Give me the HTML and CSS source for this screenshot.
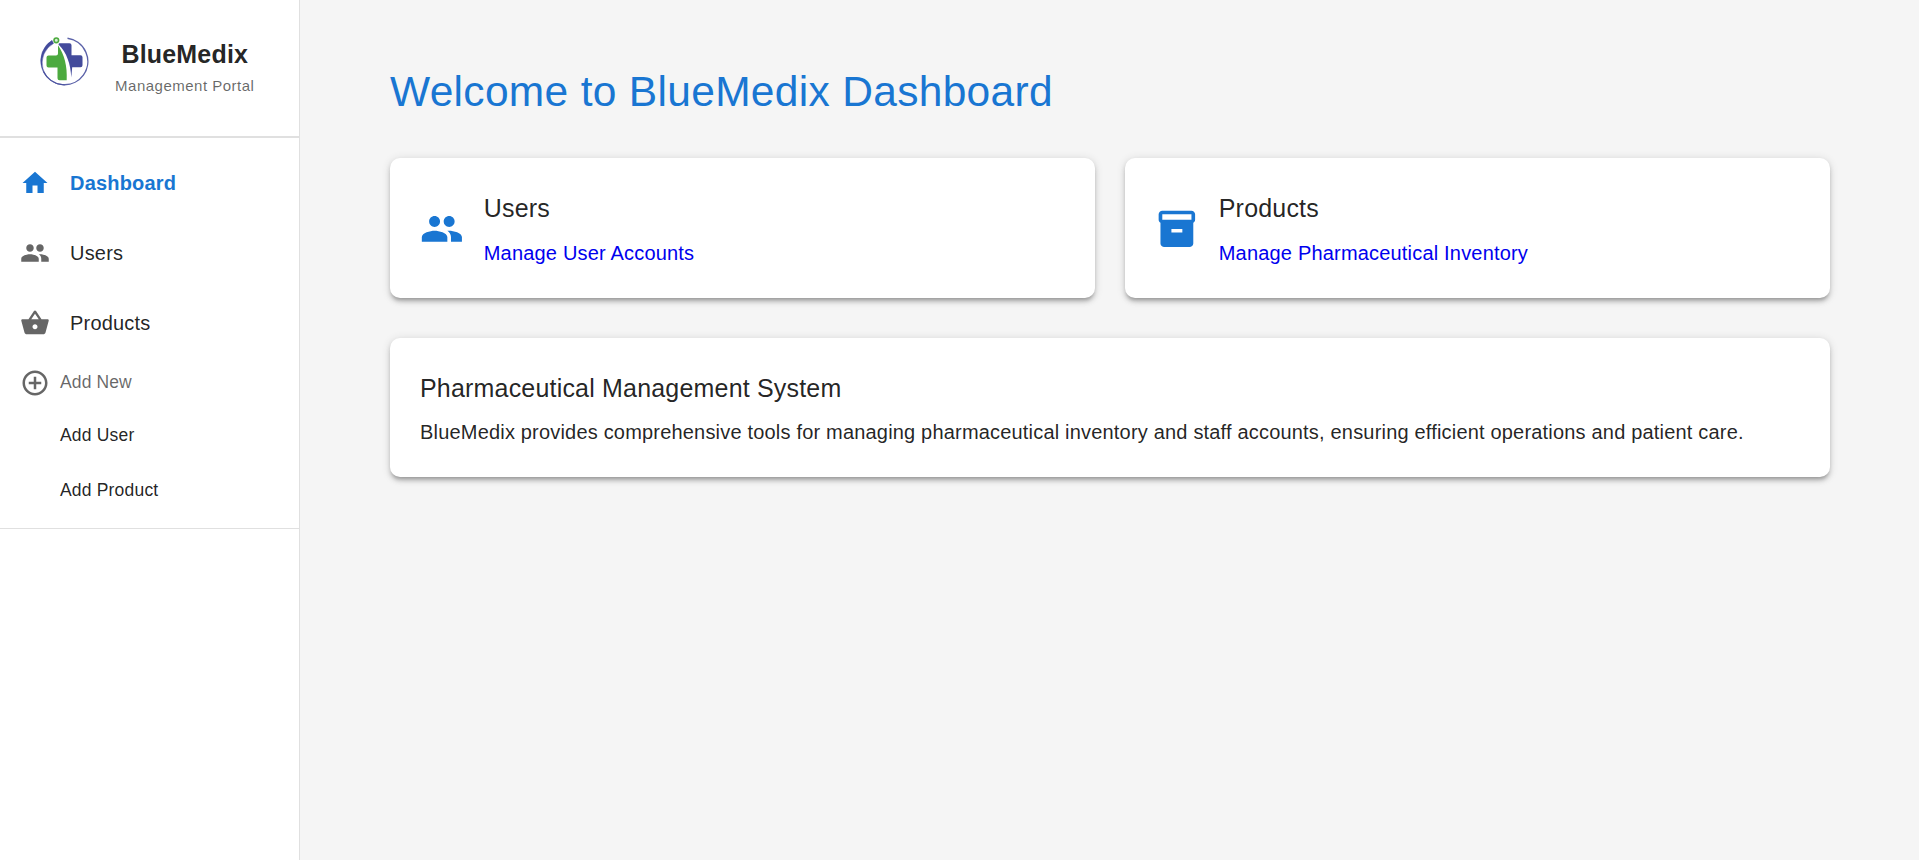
FILE: index.html
```
<!DOCTYPE html>
<html lang="en">
<head>
<meta charset="utf-8">
<title>BlueMedix Dashboard</title>
<link rel="stylesheet" href="styles.css">
</head>
<body>
<div class="layout">
  <aside class="sidebar">
    <header class="brand">
      <svg class="brand-logo" viewBox="0 0 50 50" aria-hidden="true">
        <path d="M27.500 2.300A23.300 23.300 0 1 1 3.500 35.500" fill="none" stroke="#5a61a8" stroke-width="1.400"/>
        <path d="M12 4.300A24.200 24.200 0 0 0 24.500 49A22.200 22.200 0 0 1 13.600 7.400Z" fill="#434b9c" stroke="#434b9c" stroke-width=".4"/>
        <circle cx="16.300" cy="4.300" r="2.300" fill="#d9f0d5" stroke="#4caa3f" stroke-width="1.600"/>
        <path d="M19 7.300H29.500Q31.500 7.300 31.500 9.300V19.300H40.500Q42.500 19.300 42.500 21.300V29.300Q42.500 31.300 40.500 31.300H32.200L31.300 41.500C30.500 28 27 17 18.500 8.500Z" fill="#434b9c"/>
        <path d="M18 9.300C24.500 19 27.400 30 26.700 44.200H19.500Q17.500 44.200 17.500 42.200V31.600H8.500Q6.500 31.600 6.500 29.600V21.600Q6.500 19.600 8.500 19.600H16Q18 19.600 18 17.600Z" fill="#4caa3f"/>
      </svg>
      <div class="brand-text">
        <div class="brand-name">BlueMedix</div>
        <div class="brand-sub">Management Portal</div>
      </div>
    </header>
    <nav class="nav">
      <a class="nav-item active">
        <svg class="icon" viewBox="0 0 24 24"><path d="M10 20v-6h4v6h5v-8h3L12 3 2 12h3v8z"/></svg>
        <span>Dashboard</span>
      </a>
      <a class="nav-item">
        <svg class="icon" viewBox="0 0 24 24"><path d="M16 11c1.660 0 2.990-1.340 2.990-3S17.660 5 16 5s-3 1.340-3 3 1.340 3 3 3m-8 0c1.660 0 2.990-1.340 2.990-3S9.660 5 8 5 5 6.340 5 8s1.340 3 3 3m0 2c-2.330 0-7 1.170-7 3.500V19h14v-2.500c0-2.330-4.670-3.500-7-3.500m8 0c-.29 0-.62.02-.97.05 1.160.84 1.970 1.970 1.970 3.450V19h6v-2.500c0-2.330-4.670-3.500-7-3.500"/></svg>
        <span>Users</span>
      </a>
      <a class="nav-item">
        <svg class="icon" viewBox="0 0 24 24"><path d="m17.210 9-4.380-6.560c-.19-.28-.51-.42-.83-.42s-.64.14-.83.430L6.790 9H2c-.55 0-1 .45-1 1 0 .09.010.180.040.270l2.540 9.270c.23.840 1 1.460 1.920 1.460h13c.92 0 1.690-.62 1.930-1.460l2.540-9.270L23 10c0-.55-.45-1-1-1zM9 9l3-4.400L15 9zm3 8c-1.100 0-2-.9-2-2s.9-2 2-2 2 .9 2 2-.9 2-2 2"/></svg>
        <span>Products</span>
      </a>
      <div class="group-title">
        <svg class="icon" viewBox="0 0 24 24"><path d="M13 7h-2v4H7v2h4v4h2v-4h4v-2h-4zm-1-5C6.480 2 2 6.480 2 12s4.480 10 10 10 10-4.480 10-10S17.520 2 12 2m0 18c-4.410 0-8-3.590-8-8s3.590-8 8-8 8 3.590 8 8-3.590 8-8 8"/></svg>
        <span>Add New</span>
      </div>
      <a class="sub-item">Add User</a>
      <a class="sub-item">Add Product</a>
    </nav>
  </aside>
  <main class="main">
    <div class="container">
      <h1 class="title">Welcome to BlueMedix Dashboard</h1>
      <div class="cards">
        <section class="card card-link">
          <svg class="icon-large" viewBox="0 0 24 24"><path d="M16 11c1.660 0 2.990-1.340 2.990-3S17.660 5 16 5s-3 1.340-3 3 1.340 3 3 3m-8 0c1.660 0 2.990-1.340 2.990-3S9.660 5 8 5 5 6.340 5 8s1.340 3 3 3m0 2c-2.330 0-7 1.170-7 3.500V19h14v-2.500c0-2.330-4.670-3.500-7-3.500m8 0c-.29 0-.62.02-.97.05 1.160.84 1.970 1.970 1.970 3.450V19h6v-2.500c0-2.330-4.670-3.500-7-3.500"/></svg>
          <div class="card-text">
            <h2 class="card-title">Users</h2>
            <a class="link">Manage User Accounts</a>
          </div>
        </section>
        <section class="card card-link">
          <svg class="icon-large" viewBox="0 0 24 24"><path d="M20 2H4c-1 0-2 .9-2 2v3.010c0 .72.430 1.340 1 1.690V20c0 1.100 1.100 2 2 2h14c.9 0 2-.9 2-2V8.700c.57-.35 1-.97 1-1.690V4c0-1.100-1-2-2-2m-5 12H9v-2h6zm5-7H4V4h16z"/></svg>
          <div class="card-text">
            <h2 class="card-title">Products</h2>
            <a class="link">Manage Pharmaceutical Inventory</a>
          </div>
        </section>
      </div>
      <section class="card about">
        <h2 class="card-title">Pharmaceutical Management System</h2>
        <p class="body-text">BlueMedix provides comprehensive tools for managing pharmaceutical inventory and staff accounts, ensuring efficient operations and patient care.</p>
      </section>
    </div>
  </main>
</div>
</body>
</html>
```

FILE: styles.css
```
* { box-sizing: border-box; }

body {
  margin: 0;
  background: #f5f5f5;
  color: rgba(0, 0, 0, 0.87);
  font-family: "Liberation Sans", Arial, sans-serif;
  font-size: 20px;
  line-height: 1.5;
  letter-spacing: 0.00938em;
}

h1, h2, p { margin: 0; font-weight: 400; }

.layout { display: flex; min-height: 100vh; }

.sidebar {
  flex: 0 0 300px;
  background: #fff;
  border-right: 1px solid #e0e0e0;
}

.brand {
  display: flex;
  height: 138px;
  padding: 34px 0 0 40px;
  border-bottom: 2px solid #e0e0e0;
}

.brand-logo { width: 50px; height: 50px; margin-top: 2px; }

.brand-text { width: 139.5px; margin-left: 25px; text-align: center; }

.brand-name {
  font-size: 25px;
  font-weight: 700;
  line-height: 40px;
  letter-spacing: 0.0075em;
}

.brand-sub {
  color: rgba(0, 0, 0, 0.6);
  font-size: 15px;
  line-height: 23px;
  letter-spacing: 0.03333em;
  white-space: nowrap;
}

.nav { padding: 10px 0; border-bottom: 1px solid #e0e0e0; height: 391px; }

.nav-item {
  display: flex;
  align-items: center;
  gap: 20px;
  height: 70px;
  padding: 0 20px;
}

.icon { width: 30px; height: 30px; fill: #666; flex: none; }

.active { color: #1976d2; font-weight: 700; }
.active .icon { fill: #1976d2; }

.group-title {
  display: flex;
  align-items: center;
  gap: 10px;
  height: 50px;
  padding: 0 20px;
  color: rgba(0, 0, 0, 0.6);
  font-size: 17.5px;
  letter-spacing: 0.00714em;
}

.group-title span { margin-top: -2px; }

.sub-item {
  display: flex;
  align-items: center;
  height: 55px;
  padding-left: 60px;
  font-size: 17.5px;
  letter-spacing: 0.01071em;
}

.main { flex: 1; padding: 65.5px 29px 0 30px; }

.container { max-width: 1500px; margin: 0 auto; padding: 0 30px; }

.title {
  color: #1976d2;
  font-size: 42.5px;
  line-height: 1.235;
  letter-spacing: 0.00735em;
  margin-bottom: 40px;
}

.cards { display: grid; grid-template-columns: 1fr 1fr; gap: 30px; }

.card {
  padding: 30px;
  background: #fff;
  border-radius: 10px;
  box-shadow: 0 3.75px 3.75px -2.5px rgba(0, 0, 0, 0.2),
    0 3.75px 5px 0 rgba(0, 0, 0, 0.14),
    0 1.25px 10px 0 rgba(0, 0, 0, 0.12);
}

.card-link { display: flex; align-items: center; gap: 20px; }

.icon-large {
  width: 43.75px;
  height: 43.75px;
  margin-top: 2px;
  fill: #1976d2;
  flex: none;
}

.card-title {
  font-size: 25px;
  line-height: 1.6;
  letter-spacing: 0.0075em;
  margin-bottom: 10px;
}

.link { display: block; color: #00e; }

.about { margin-top: 40px; }
.about .card-title { margin-bottom: 8.75px; }
```
